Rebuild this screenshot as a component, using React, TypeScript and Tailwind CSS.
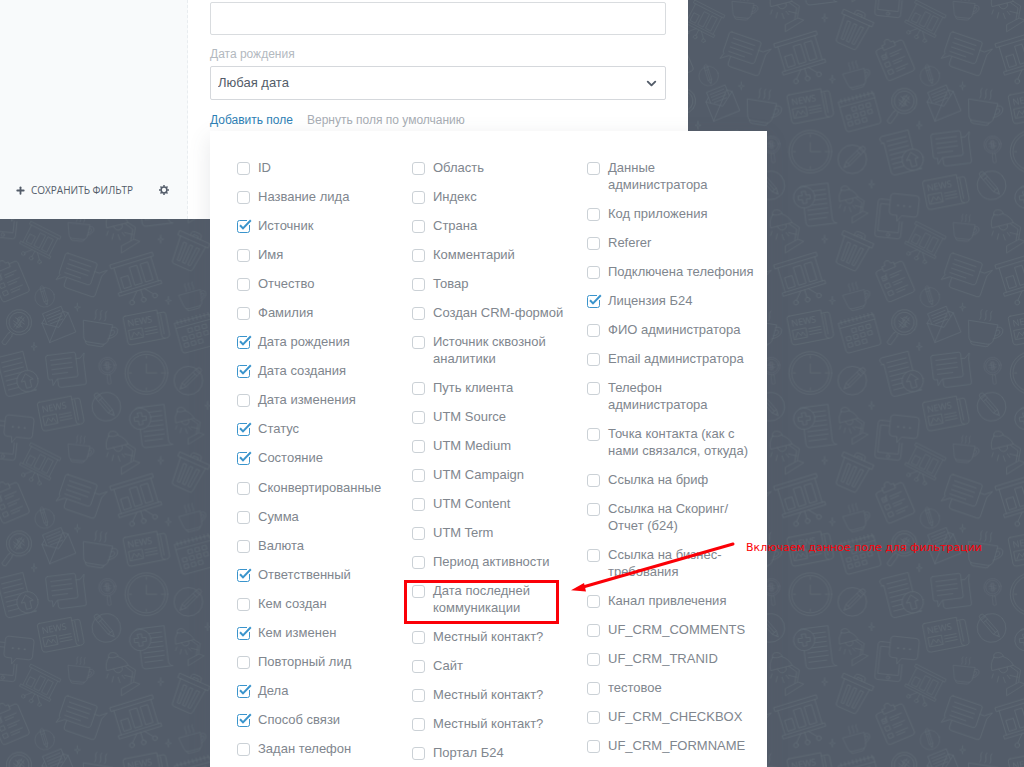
import React from "react";
import { ChevronDown, Plus } from "lucide-react";

type Field = { label: string; checked?: boolean; highlighted?: boolean };

const firstColumn: Field[] = [
  { label: "ID" },
  { label: "Название лида" },
  { label: "Источник", checked: true },
  { label: "Имя" },
  { label: "Отчество" },
  { label: "Фамилия" },
  { label: "Дата рождения", checked: true },
  { label: "Дата создания", checked: true },
  { label: "Дата изменения" },
  { label: "Статус", checked: true },
  { label: "Состояние", checked: true },
  { label: "Сконвертированные" },
  { label: "Сумма" },
  { label: "Валюта" },
  { label: "Ответственный", checked: true },
  { label: "Кем создан" },
  { label: "Кем изменен", checked: true },
  { label: "Повторный лид" },
  { label: "Дела", checked: true },
  { label: "Способ связи", checked: true },
  { label: "Задан телефон" },
];

const secondColumn: Field[] = [
  { label: "Область" },
  { label: "Индекс" },
  { label: "Страна" },
  { label: "Комментарий" },
  { label: "Товар" },
  { label: "Создан CRM-формой" },
  { label: "Источник сквозной аналитики" },
  { label: "Путь клиента" },
  { label: "UTM Source" },
  { label: "UTM Medium" },
  { label: "UTM Campaign" },
  { label: "UTM Content" },
  { label: "UTM Term" },
  { label: "Период активности" },
  { label: "Дата последней коммуникации", highlighted: true },
  { label: "Местный контакт?" },
  { label: "Сайт" },
  { label: "Местный контакт?" },
  { label: "Местный контакт?" },
  { label: "Портал Б24" },
];

const thirdColumn: Field[] = [
  { label: "Данные администратора" },
  { label: "Код приложения" },
  { label: "Referer" },
  { label: "Подключена телефония" },
  { label: "Лицензия Б24", checked: true },
  { label: "ФИО администратора" },
  { label: "Email администратора" },
  { label: "Телефон администратора" },
  { label: "Точка контакта (как с нами связался, откуда)" },
  { label: "Ссылка на бриф" },
  { label: "Ссылка на Скоринг/ Отчет (б24)" },
  { label: "Ссылка на бизнес-требования" },
  { label: "Канал привлечения" },
  { label: "UF_CRM_COMMENTS" },
  { label: "UF_CRM_TRANID" },
  { label: "тестовое" },
  { label: "UF_CRM_CHECKBOX" },
  { label: "UF_CRM_FORMNAME" },
];

function Cup({ at }: { at: string }) {
  return (
    <g transform={at}>
      <path d="M0 0H88L83 42Q80 62 66 62H22Q9 62 7 46ZM14 61Q16 70 24 70H62Q70 70 72 61M87 8Q98 2 105 12Q110 32 80 44M86 18Q94 12 97 19Q98 30 84 34" />
      <path d="M34 -38c-8 10 5 18-2 30M49 -38c-8 10 5 18-2 30M64 -38c-8 10 5 18-2 30" />
    </g>
  );
}

function News({ at }: { at: string }) {
  return (
    <g transform={at}>
      <path d="M6 0H104V78Q104 88 114 88H10Q0 88 0 78V6Q0 0 6 0ZM104 10H122Q128 10 128 18V76Q128 88 116 88M112 14V74" />
      <path d="M10 44H50V72H10ZM14 68L24 52L32 64L38 54L46 68M58 48H94M58 57H94M58 66H94" />
      <text x="10" y="33" fontSize="27" fill="#5f6a74" stroke="none" fontFamily="Open Sans, sans-serif">
        NEWS
      </text>
    </g>
  );
}

function Lamp({ at }: { at: string }) {
  return (
    <g transform={at}>
      <path d="M8 12Q4 0 18 -2Q32 -4 36 10Q58 18 66 36L2 52Q-4 30 8 12ZM8 13Q22 16 36 9M22 47Q30 64 44 56Q52 50 48 42" />
      <path d="M58 40L80 56L74 90M66 36L88 50L82 84M46 126V106L84 86L100 92ZM56 66L80 72M6 62L2 74M22 70L18 86M36 72L42 88M48 66L56 76" />
    </g>
  );
}

function Board({ at }: { at: string }) {
  return (
    <g transform={at}>
      <path d="M-4 0H128V12H-4ZM4 12V88M120 12V88M-4 88H128V98H-4ZM16 46H38V80H16ZM50 24H72V80H50ZM84 24H106V80H84ZM62 98V122M50 98L30 120M74 98L94 120" />
      <circle cx="62" cy="129" r="7" />
      <circle cx="26" cy="127" r="7" />
      <circle cx="98" cy="127" r="7" />
    </g>
  );
}

function PencilBadge({ at }: { at: string }) {
  return (
    <g transform={at}>
      <circle r="43" />
      <path d="M-8 -42Q-8 -52 0 -52T8 -42V18L0 36L-8 18ZM-8 -38H8M-8 -28H8M-8 18H8M0 -28V18M-3 29H3" />
    </g>
  );
}

function Chats({ at }: { at: string }) {
  return (
    <g transform={at}>
      <path d="M6 0H84Q90 0 90 6V68Q90 74 84 74H26L12 92V74H6Q0 74 0 68V6Q0 0 6 0ZM90 20H102L116 6L112 24V94Q112 100 106 100H36Q28 100 28 92V76" />
      <path d="M14 16H76M14 30H76M14 44H76M14 58H60" />
    </g>
  );
}

function Magnifier({ at }: { at: string }) {
  return (
    <g transform={at}>
      <circle r="38" />
      <circle r="30" />
      <path d="M-5 38V44H-7V78Q0 84 7 78V44H5V38M10 -12Q-10 -20 -10 -8Q-10 0 0 0T10 9Q8 18 -10 12M-4 -20V20M4 -20V20M-16 -5H16M-16 6H16" />
    </g>
  );
}

function Trash({ at }: { at: string }) {
  return (
    <g transform={at}>
      <path d="M0 0H98V14H0ZM34 0V-8Q34 -15 42 -15H58Q66 -15 66 -8V0M42 0V-6H58V0M8 14L16 92Q17 98 24 98H74Q81 98 82 92L90 14" />
      <path d="M24 28L28 84H36L34 28ZM45 28V84H54V28ZM66 28L63 84H71L76 28Z" />
    </g>
  );
}

function Sheet({ at, badge }: { at: string; badge: React.ReactNode }) {
  return (
    <g transform={at}>
      <path d="M4 16Q-8 0 6 -4H88V102Q88 116 100 118H20Q8 118 8 104V16H0M18 14H78M18 28H78M18 42H78M18 56H78M18 70H78M18 84H78M18 98H72" />
      {badge}
    </g>
  );
}

const spark = "v6l2 4 7 2-7 2-2 4v6l-2-10-7-2 7-2z";
const offsets = [-664, 0, 664];

/* Repeating wallpaper of office drawings; one tile is 664 units wide at a third of a pixel each. */
function Wallpaper() {
  return (
    <svg className="absolute inset-0 h-full w-full" aria-hidden="true">
      <defs>
        <g id="office" fill="none" stroke="#5f6a74" strokeWidth="2.2" strokeLinejoin="round" strokeLinecap="round">
          <circle cx="361" cy="455" r="64" />
          <circle cx="361" cy="455" r="56" />
          <path d="M361 428V455H392M361 404v6M361 500v6M310 455h6M406 455h6" />
          <Cup at="translate(173 297) rotate(9)" />
          <Cup at="translate(791 668) rotate(6) scale(.74)" />
          <Cup at="translate(459 222) rotate(-15) scale(.75)" />
          <News at="translate(290 286) rotate(-11)" />
          <News at="translate(697 544) rotate(-11)" />
          <Lamp at="translate(240 632)" />
          <Lamp at="translate(447 560) scale(.86)" />
          <Board at="translate(256 130) rotate(-17)" />
          <Board at="translate(682 2) rotate(27) scale(.76)" />
          <PencilBadge at="translate(487 478) rotate(45)" />
          <PencilBadge at="translate(905 556) rotate(-41)" />
          <PencilBadge at="translate(720 228) rotate(-17) scale(.68)" />
          <Chats at="translate(722 403) rotate(-7)" />
          <g transform="translate(784 94) rotate(19)">
            <path d="M6 0H94Q100 0 100 6V62Q100 70 92 70H20L-2 86L4 68Q0 68 0 60V6Q0 0 6 0ZM100 26H114L134 10L124 32V92Q124 100 116 100H34Q26 100 26 92V72M16 16H84M16 30H84M16 44H84M16 58H66" />
          </g>
          <Magnifier at="translate(643 303) rotate(36)" />
          <Magnifier at="translate(908 434) rotate(-7) scale(.68)" />
          <Trash at="translate(462 28) rotate(24)" />
          <Sheet
            at="translate(570 415) rotate(-14)"
            badge={
              <g>
                <circle cx="80" cy="86" r="32" fill="#535c69" />
                <path d="M80 64L98 84H88V106H72V84H62Z" />
              </g>
            }
          />
          <Sheet
            at="translate(327 564) rotate(-7)"
            badge={
              <g>
                <circle cx="12" cy="30" r="32" fill="#535c69" />
                <path d="M6 12H18V24H30V36H18V48H6V36H-6V24H6Z" />
              </g>
            }
          />
          <g transform="translate(446 306) rotate(-15)">
            <path d="M0 0H108V86Q108 94 100 94H8Q0 94 0 86ZM0 16H108M8 -6V6M20 -6V6M32 -6V6M44 -6V6M56 -6V6M68 -6V6M80 -6V6M92 -6V6M104 -6V6" />
            <path d="M34 26h12v12h-12zM56 26h12v12h-12zM78 26h12v12h-12zM12 46h12v12h-12zM34 46h12v12h-12zM56 46h12v12h-12zM78 46h12v12h-12zM12 66h12v12h-12zM34 66h12v12h-12zM56 66h12v12h-12z" />
          </g>
          <g transform="translate(556 152) rotate(-23)">
            <path d="M24 0H8Q0 0 0 8V92Q0 100 8 100H80Q88 100 88 92V8Q88 0 80 0H62M24 8V-6H34Q34 -18 43 -18T53 -6H62V8ZM12 22h13v13h-13zM12 46h13v13h-13zM12 70h13v13h-13zM14 26l5 6 9-14M36 26H74M36 34H62M36 50H74M36 58H62M36 74H74M36 82H62" />
          </g>
          <g transform="translate(712 306) rotate(-22)">
            <path d="M0 0L12 -10M72 -10L84 0V62H0ZM0 0V62M0 0L42 30L84 0M12 8V-26H72V8M20 -16H64M20 -7H64M20 2H64M22 11H62" />
          </g>
          <g transform="translate(566 592) rotate(6)">
            <path d="M12 4H8Q0 4 0 12V108Q0 118 8 118H70Q78 118 78 108V66M34 4H12M34 18H8V100H70V66M36 -6Q36 -16 46 -16H112Q122 -16 122 -6V38Q122 48 112 48H74L62 66L60 48H46Q36 48 36 38Z" />
            <path d="M60 18h1M78 18h1M96 18h1" strokeWidth="5" />
            <circle cx="40" cy="109" r="5" />
          </g>
          <path d={`M404 42${spark}M818 246${spark}M427 226${spark}M688 364${spark}M545 541${spark}`} strokeWidth="1.5" />
        </g>
        <pattern id="wall" width="664" height="664" patternUnits="userSpaceOnUse" patternTransform="translate(690 0) scale(.3333)">
          {offsets.map((x) => offsets.map((y) => <use key={`${x}:${y}`} href="#office" x={x} y={y} />))}
        </pattern>
      </defs>
      <rect width="100%" height="100%" fill="url(#wall)" />
    </svg>
  );
}

function Gear() {
  return (
    <svg viewBox="0 0 10 10" fill="none" stroke="currentColor" aria-hidden="true" className="size-[10px]">
      <circle cx="5" cy="5" r="2.9" strokeWidth="1.5" />
      <path
        d="M5 0V1.800M5 8.200V10M0 5H1.800M8.200 5H10M1.500 1.500L2.700 2.700M7.300 7.300L8.500 8.500M8.500 1.500L7.300 2.700M2.700 7.300L1.500 8.500"
        strokeWidth="1.5"
      />
    </svg>
  );
}

function FieldOption({ field }: { field: Field }) {
  return (
    <li className="relative">
      <label className="grid grid-cols-[13px_minmax(0,1fr)] gap-x-2 pr-2 text-[13px] leading-[17px] text-[#80868e]">
        <input
          type="checkbox"
          defaultChecked={field.checked}
          className="peer col-start-1 row-start-1 mt-[3px] size-[13px] appearance-none rounded-[3px] border border-[#cbd1d6] bg-white checked:border-transparent"
        />
        <svg
          viewBox="0 0 13 13"
          fill="none"
          stroke="#3a94cc"
          aria-hidden="true"
          className="pointer-events-none invisible col-start-1 row-start-1 mt-[3px] size-[13px] overflow-visible peer-checked:visible"
        >
          <path d="M10 .5H2.5Q.5.5.5 2.5V10.500Q.5 12.500 2.500 12.500H10.500Q12.500 12.500 12.500 10.500V5" />
          <path d="M3 5.200L6 8.400L13.800.2" strokeWidth="2" />
        </svg>
        <span className="col-start-2 row-start-1">{field.label}</span>
      </label>
      {field.highlighted && (
        <span className="pointer-events-none absolute -bottom-2 -left-2 -top-0.5 right-7 border-[3px] border-[#fb0007]" />
      )}
    </li>
  );
}

function FieldColumn({ fields, spread }: { fields: Field[]; spread?: boolean }) {
  return (
    <ul className={spread ? "flex flex-col justify-between pb-1" : "flex flex-col gap-3"}>
      {fields.map((field, index) => (
        <FieldOption key={index} field={field} />
      ))}
    </ul>
  );
}

export default function App() {
  return (
    <div className="relative h-screen overflow-hidden bg-[#535c69] font-['Liberation_Sans',Arial,sans-serif]">
      <Wallpaper />
      <main className="relative flex w-full max-w-[688px] bg-white">
        <aside className="flex w-[188px] shrink-0 flex-col justify-end border-r border-dashed border-[#e9edf0] bg-[#f8fafb] pb-[21px] pl-[15px] pr-[18px]">
          <div className="flex items-center justify-between font-['Open_Sans',sans-serif] text-[10px] leading-4 text-[#535c69]">
            <button type="button" className="flex items-center gap-[5px] uppercase">
              <Plus size={11} strokeWidth={4} aria-hidden="true" />
              Сохранить фильтр
            </button>
            <button type="button" aria-label="Настройки">
              <Gear />
            </button>
          </div>
        </aside>

        <form className="relative min-w-0 grow px-[22px] pb-[91px] pt-0.5">
          <input
            type="text"
            aria-label="Значение"
            className="block h-[33px] w-full rounded-[2px] border border-[#d9dcdf] bg-white px-2 text-[13px] text-[#535c69]"
          />
          <label htmlFor="birthday" className="mb-1 mt-[11px] block text-xs leading-4 text-[#b3b9c0]">
            Дата рождения
          </label>
          <div className="relative">
            <select
              id="birthday"
              className="block h-[34px] w-full appearance-none rounded-[2px] border border-[#d5d8dc] bg-white px-[7px] text-[13px] text-[#535c69]"
            >
              <option>Любая дата</option>
            </select>
            <ChevronDown
              size={15}
              strokeWidth={3}
              aria-hidden="true"
              className="pointer-events-none absolute right-[7px] top-2.5 text-[#535c69]"
            />
          </div>
          <div className="relative mt-3 flex gap-[14px] text-xs leading-4">
            <a href="#add" className="text-[#2f7fb5]">
              Добавить поле
            </a>
            <a href="#reset" className="text-[#a8adb4]">
              Вернуть поля по умолчанию
            </a>

            <div className="absolute left-0 top-full mt-[3px] grid w-[557px] grid-cols-3 bg-white pb-10 pl-[27px] pr-[5px] pt-7 shadow-[0_7px_21px_rgba(83,92,105,0.14)]">
              <FieldColumn fields={firstColumn} spread />
              <FieldColumn fields={secondColumn} />
              <FieldColumn fields={thirdColumn} />
            </div>
          </div>
        </form>
      </main>

      <svg
        viewBox="0 0 164 50"
        aria-hidden="true"
        className="pointer-events-none absolute left-[571px] top-[542px] h-[50px] w-[164px]"
      >
        <path d="M162 2L12 45" stroke="#fb0007" strokeWidth="3" strokeLinecap="round" />
        <path d="M0 48.300L13 41L15 49.500Z" fill="#fb0007" />
      </svg>
      <p className="absolute left-[746px] top-[540px] whitespace-nowrap font-['DejaVu_Sans',sans-serif] text-[11px] leading-4 text-[#fb0007]">
        Включаем данное поле для фильтрации
      </p>
    </div>
  );
}
